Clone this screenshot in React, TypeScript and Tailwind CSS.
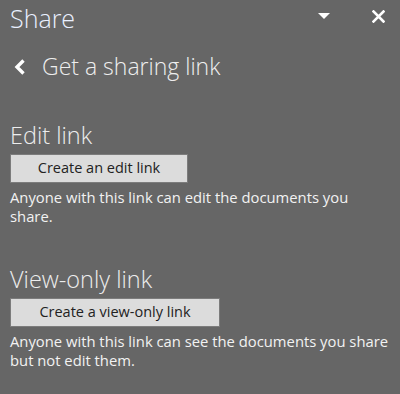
import React from 'react';

const font = { fontFamily: '"Open Sans", "Noto Sans", sans-serif' };

function LinkSection({ title, button, lines, buttonWidth }: { title: string; button: string; lines: string[]; buttonWidth: string }) {
  return (
    <section className="flex flex-col">
      <h2 className="text-[23.5px] font-light leading-[28px] text-[#ededed]">{title}</h2>
      <button
        type="button"
        className={`mt-[5px] h-[29px] ${buttonWidth} border border-[#7c7c7c] bg-[#dcdcdc] text-[14.5px] leading-none text-[#222]`}
      >
        {button}
      </button>
      <p className="mt-[5px] text-[14.8px] leading-[19px] whitespace-nowrap text-[#f2f2f2]">
        {lines.map((l, i) => (
          <span key={i} className="block">{l}</span>
        ))}
      </p>
    </section>
  );
}

export default function App() {
  return (
    <div className="h-[394px] w-[400px] overflow-hidden bg-[#666666] pl-[10px]" style={font}>
      <header className="flex h-[36px] items-center justify-between pr-[15px]">
        <h1 className="text-[25px] font-light leading-none text-[#eaf0ff]">Share</h1>
        <div className="flex items-center gap-[42px]">
          <svg width="12" height="6" viewBox="0 0 12 6" className="mt-[-4px]">
            <path d="M0 0h12L6 6z" fill="#ffffff" />
          </svg>
          <svg width="13" height="13" viewBox="0 0 13 13" className="mt-[-4px]">
            <path d="M1.5 1.5l10 10M11.5 1.5l-10 10" stroke="#ffffff" strokeWidth="2.6" strokeLinecap="square" />
          </svg>
        </div>
      </header>

      <div className="mt-[19px] flex items-center">
        <svg width="13" height="16" viewBox="0 0 13 16" className="ml-[3px]">
          <path d="M10.5 1.5L4 8l6.5 6.5" fill="none" stroke="#ffffff" strokeWidth="3.4" />
        </svg>
        <span className="ml-[16px] text-[23px] font-light leading-none text-[#eeeeee]">Get a sharing link</span>
      </div>

      <div className="mt-[43px] flex flex-col gap-[39px]">
        <LinkSection
          title="Edit link"
          button="Create an edit link"
          buttonWidth="w-[178px]"
          lines={['Anyone with this link can edit the documents you', 'share.']}
        />
        <LinkSection
          title="View-only link"
          button="Create a view-only link"
          buttonWidth="w-[210px]"
          lines={['Anyone with this link can see the documents you share', 'but not edit them.']}
        />
      </div>
    </div>
  );
}
